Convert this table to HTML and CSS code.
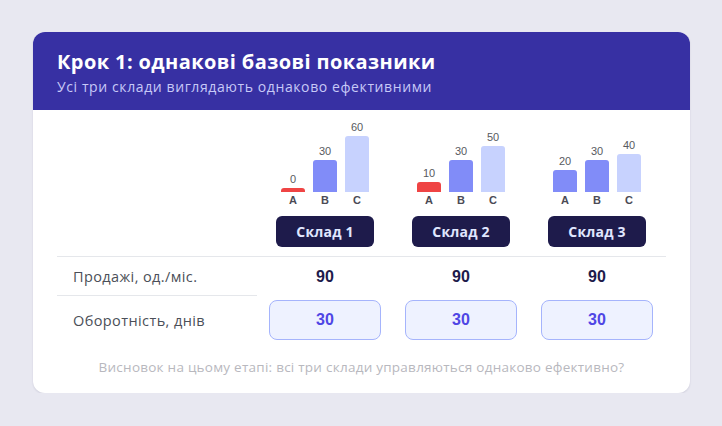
FILE: index.html
```html
<!DOCTYPE html>
<html lang="uk">
<head>
<meta charset="utf-8">
<title>Крок 1</title>
<link rel="stylesheet" href="styles.css">
</head>
<body>
<div class="card">
  <div class="header">
    <h1 class="title">Крок 1: однакові базові показники</h1>
    <p class="subtitle">Усі три склади виглядають однаково ефективними</p>
  </div>
  <div class="body">
    <div class="row chart-row">
      <div class="label-cell"></div>
      <div class="col">
        <div class="bars">
          <div class="bar-item"><span class="bar-val">0</span><div class="bar red" style="height:4px"></div></div>
          <div class="bar-item"><span class="bar-val">30</span><div class="bar mid" style="height:32px"></div></div>
          <div class="bar-item"><span class="bar-val">60</span><div class="bar light" style="height:56px"></div></div>
        </div>
      </div>
      <div class="col">
        <div class="bars">
          <div class="bar-item"><span class="bar-val">10</span><div class="bar red" style="height:10px"></div></div>
          <div class="bar-item"><span class="bar-val">30</span><div class="bar mid" style="height:32px"></div></div>
          <div class="bar-item"><span class="bar-val">50</span><div class="bar light" style="height:46px"></div></div>
        </div>
      </div>
      <div class="col">
        <div class="bars">
          <div class="bar-item"><span class="bar-val">20</span><div class="bar mid" style="height:22px"></div></div>
          <div class="bar-item"><span class="bar-val">30</span><div class="bar mid" style="height:32px"></div></div>
          <div class="bar-item"><span class="bar-val">40</span><div class="bar light" style="height:38px"></div></div>
        </div>
      </div>
    </div>
    <div class="row letters-row">
      <div class="label-cell"></div>
      <div class="col letters"><span>A</span><span>B</span><span>C</span></div>
      <div class="col letters"><span>A</span><span>B</span><span>C</span></div>
      <div class="col letters"><span>A</span><span>B</span><span>C</span></div>
    </div>
    <div class="row btn-row">
      <div class="label-cell"></div>
      <div class="col"><div class="wh-btn">Склад 1</div></div>
      <div class="col"><div class="wh-btn">Склад 2</div></div>
      <div class="col"><div class="wh-btn">Склад 3</div></div>
    </div>
    <div class="row data-row sales">
      <div class="label-cell label">Продажі, од./міс.</div>
      <div class="col num">90</div>
      <div class="col num">90</div>
      <div class="col num">90</div>
    </div>
    <div class="row data-row turnover">
      <div class="label-cell label">Оборотність, днів</div>
      <div class="col"><div class="box">30</div></div>
      <div class="col"><div class="box">30</div></div>
      <div class="col"><div class="box">30</div></div>
    </div>
    <p class="footer">Висновок на цьому етапі: всі три склади управляються однаково ефективно?</p>
  </div>
</div>
</body>
</html>
```
FILE: styles.css
```css
* { box-sizing: border-box; }
html, body { margin: 0; padding: 0; }
body {
  background: #e8e8f1;
  font-family: "Open Sans", "Noto Sans", sans-serif;
  padding: 32px 32px 0 33px;
}
.card {
  width: 657px;
  height: 361px;
  background: #ffffff;
  border-radius: 12px;
  overflow: hidden;
  box-shadow: 0 1px 2px rgba(30, 27, 75, 0.12);
}
.header {
  background: #3730a3;
  padding: 17px 24px 0 24px;
  height: 78px;
}
.title {
  margin: 0;
  color: #ffffff;
  font-size: 20px;
  line-height: 26px;
  font-weight: 700;
  letter-spacing: 0.4px;
}
.subtitle {
  margin: 3px 0 0 0;
  color: #c7c9f7;
  font-size: 14px;
  line-height: 18px;
  letter-spacing: 0.6px;
}
.body {
  padding: 0 24px;
}
.row {
  display: grid;
  grid-template-columns: 200px 136px 136px 136px;
}
.col {
  padding: 0 12px;
}
.chart-row { height: 82px; }
.bars {
  height: 82px;
  display: flex;
  justify-content: center;
  align-items: flex-end;
  gap: 8px;
}
.bar-item {
  width: 24px;
  display: flex;
  flex-direction: column;
  align-items: center;
}
.bar-val {
  font-family: "Liberation Sans", Arial, sans-serif;
  font-size: 11px;
  line-height: 13px;
  color: #585a60;
  margin-bottom: 2px;
}
.bar {
  width: 24px;
  border-radius: 3px 3px 0 0;
}
.bar.red { background: #ef4444; }
.bar.mid { background: #818cf8; }
.bar.light { background: #c7d2fe; }
.letters {
  display: flex;
  justify-content: center;
  gap: 8px;
  margin-top: 2px;
}
.letters span {
  width: 24px;
  text-align: center;
  font-family: "Liberation Sans", Arial, sans-serif;
  font-size: 11px;
  line-height: 12px;
  font-weight: 700;
  color: #4b4b55;
}
.btn-row { margin-top: 10px; }
.wh-btn {
  margin: 0 7px;
  height: 31px;
  background: #1e1b4b;
  border-radius: 6px;
  color: #e0e7ff;
  font-size: 14px;
  font-weight: 700;
  letter-spacing: 0.2px;
  display: flex;
  align-items: center;
  justify-content: center;
}
.data-row.sales {
  margin-top: 9px;
  border-top: 1px solid #e5e7eb;
  height: 40px;
}
.sales .label-cell { border-bottom: 1px solid #e5e7eb; }
.label {
  padding-left: 16px;
  display: flex;
  align-items: center;
  font-size: 14.5px;
  letter-spacing: 0.4px;
  color: #4b4f58;
}
.num {
  display: flex;
  align-items: center;
  justify-content: center;
  font-family: "Liberation Sans", Arial, sans-serif;
  font-size: 16px;
  font-weight: 700;
  color: #1e1b4b;
}
.turnover { height: 48px; }
.turnover .col { padding: 4px 12px; }
.box {
  height: 40px;
  background: #eef2ff;
  border: 1px solid #a5b4fc;
  border-radius: 8px;
  display: flex;
  align-items: center;
  justify-content: center;
  font-family: "Liberation Sans", Arial, sans-serif;
  font-size: 16px;
  font-weight: 700;
  color: #4f46e5;
}
.footer {
  margin: 14px 0 0 0;
  text-align: center;
  font-size: 13.5px;
  line-height: 18px;
  letter-spacing: 0.25px;
  color: #b8b8be;
}
```
